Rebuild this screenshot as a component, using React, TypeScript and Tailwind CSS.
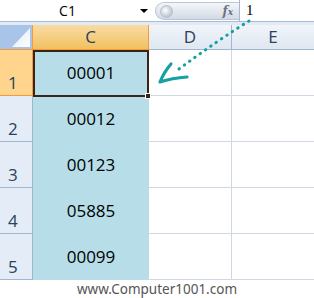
const rows = ["00001", "00012", "00123", "05885", "00099"];

const App = () => {
  return (
    <div className="relative w-[314px] h-[298px] bg-white overflow-hidden font-['Open_Sans',sans-serif]">
      {/* formula bar */}
      <div className="flex h-[22px] border-b border-[#a7bcd8] bg-white">
        <div className="flex w-[155px] items-center">
          <div className="w-[135px] text-center text-[14px] text-black leading-none">C1</div>
          <div className="ml-[5px] h-0 w-0 border-x-[4px] border-t-[4px] border-x-transparent border-t-black" />
        </div>
        <div className="mt-[2px] mb-[1px] flex w-[84px] items-center rounded-l-full border border-r-0 border-[#b9c6d6] bg-gradient-to-b from-[#f4f6f9] to-[#d3dae5]">
          <div className="ml-[4px] h-[13px] w-[13px] rounded-full bg-[radial-gradient(circle_at_40%_40%,#ffffff,#bfc7d2_70%)] border border-[#b5bfcc]" />
          <span className="ml-auto mr-[6px] font-['DejaVu_Serif',serif] text-[12px] italic font-bold text-[#6b7280] leading-none">
            f<span className="text-[9px]">x</span>
          </span>
        </div>
        <div className="flex flex-1 items-center border-l border-[#a8b7cc] pl-[6px] text-[15px] text-black leading-none font-['Liberation_Serif',serif]">
          1
        </div>
      </div>
      <div className="h-[3px] bg-[#e3eaf4]" />

      {/* grid */}
      <div className="grid grid-cols-[33px_116px_83px_82px] grid-rows-[25px_repeat(5,46px)]">
        <div className="relative border-r border-b border-[#f29a3c] bg-[#a9c4e9]">
          <svg className="absolute right-[2px] bottom-[2px]" width="18" height="19" viewBox="0 0 18 19">
            <defs>
              <linearGradient id="tri" x1="0" y1="0" x2="1" y2="1">
                <stop offset="0" stopColor="#dfe7f3" />
                <stop offset="1" stopColor="#ffffff" />
              </linearGradient>
            </defs>
            <polygon points="18,0 18,19 0,19" fill="url(#tri)" />
          </svg>
        </div>
        <div className="flex items-center justify-center border-r border-b border-[#f29a3c] bg-gradient-to-b from-[#f9dca3] to-[#f1c15f] text-[17px] text-[#28425a]">
          C
        </div>
        <div className="flex items-center justify-center border-r border-b border-[#9eb6ce] bg-gradient-to-b from-[#f1f5fa] to-[#dfe7f2] text-[17px] text-[#28425a]">
          D
        </div>
        <div className="flex items-center justify-center border-b border-[#9eb6ce] bg-gradient-to-b from-[#f1f5fa] to-[#dfe7f2] text-[17px] text-[#28425a]">
          E
        </div>

        {rows.map((val, i) => (
          <div key={val} className="contents">
            <div
              className={`flex items-end pb-[4px] pl-[8px] border-r border-b text-[17px] text-[#28425a] leading-none ${
                i === 0 ? "bg-[#ffd58d] border-[#f29a3c]" : "bg-[#e4ecf7] border-[#9eb6ce]"
              }`}
            >
              {i + 1}
            </div>
            <div className="flex items-center justify-center bg-[#b7dee8] text-[17px] text-black">{val}</div>
            <div className="border-r border-b border-[#d0d7e5]" />
            <div className="border-b border-[#d0d7e5]" />
          </div>
        ))}
      </div>

      {/* active cell outline */}
      <div className="absolute left-[33px] top-[50px] h-[47px] w-[116px] border-2 border-[#3a2418]" />
      <div className="absolute left-[145px] top-[93px] h-[6px] w-[6px] bg-[#3a2418] border border-white" />

      {/* footer */}
      <div className="absolute left-0 right-0 top-[280px] text-center text-[13.5px] leading-[18px] text-[#555] font-['Noto_Sans',sans-serif]">
        www.Computer1001.com
      </div>

      {/* arrow */}
      <svg className="absolute left-0 top-0 pointer-events-none" width="314" height="298" viewBox="0 0 314 298">
        <path
          d="M249 21 Q215 42 175 72"
          fill="none"
          stroke="#16a0a0"
          strokeWidth="3"
          strokeLinecap="round"
          strokeDasharray="0.5 6"
        />
        <path
          d="M171 64 Q164 72 160 82 Q172 78 187 77"
          fill="none"
          stroke="#16a0a0"
          strokeWidth="3.2"
          strokeLinecap="round"
          strokeLinejoin="round"
        />
      </svg>
    </div>
  );
};

export default App;
